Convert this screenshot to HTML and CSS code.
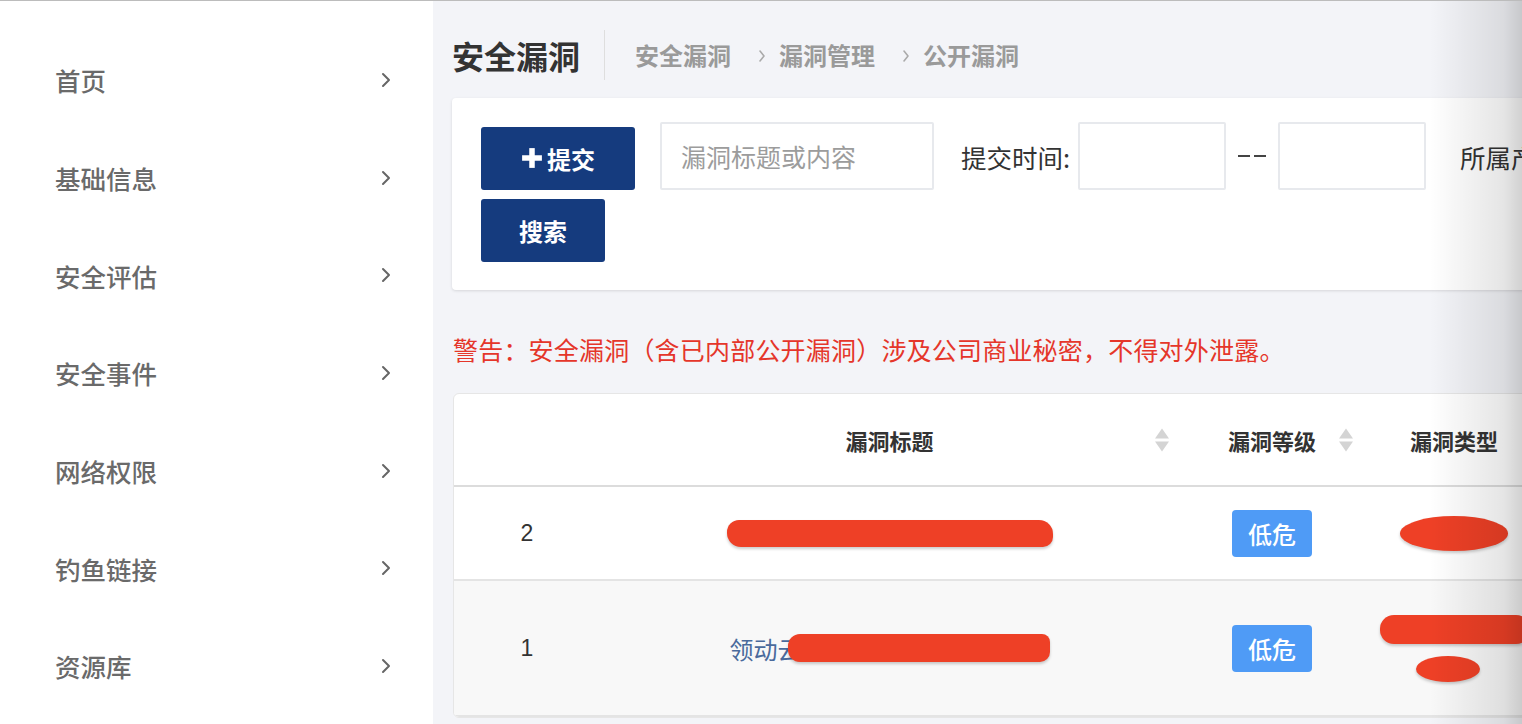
FILE: index.html
```html
<!DOCTYPE html>
<html lang="zh-CN">
<head>
<meta charset="utf-8">
<title>安全漏洞 - 公开漏洞</title>
<link rel="stylesheet" href="styles.css">
</head>
<body>
<div class="app">
  <aside class="sidebar">
    <a class="nav-item">首页<svg class="chev" viewBox="0 0 10 16"><polyline points="2,2 8,8 2,14"/></svg></a>
    <a class="nav-item">基础信息<svg class="chev" viewBox="0 0 10 16"><polyline points="2,2 8,8 2,14"/></svg></a>
    <a class="nav-item">安全评估<svg class="chev" viewBox="0 0 10 16"><polyline points="2,2 8,8 2,14"/></svg></a>
    <a class="nav-item">安全事件<svg class="chev" viewBox="0 0 10 16"><polyline points="2,2 8,8 2,14"/></svg></a>
    <a class="nav-item">网络权限<svg class="chev" viewBox="0 0 10 16"><polyline points="2,2 8,8 2,14"/></svg></a>
    <a class="nav-item">钓鱼链接<svg class="chev" viewBox="0 0 10 16"><polyline points="2,2 8,8 2,14"/></svg></a>
    <a class="nav-item">资源库<svg class="chev" viewBox="0 0 10 16"><polyline points="2,2 8,8 2,14"/></svg></a>
  </aside>
  <main class="main">
    <header class="page-header">
      <h1 class="page-title">安全漏洞</h1>
      <span class="divider"></span>
      <nav class="crumbs">
        <span class="crumb">安全漏洞</span>
        <svg class="crumb-sep" viewBox="0 0 10 14"><polyline points="3,2 7,7 3,12"/></svg>
        <span class="crumb">漏洞管理</span>
        <svg class="crumb-sep" viewBox="0 0 10 14"><polyline points="3,2 7,7 3,12"/></svg>
        <span class="crumb">公开漏洞</span>
      </nav>
    </header>

    <section class="filter-card">
      <div class="filter-row">
        <button class="btn btn-submit"><svg class="plus" viewBox="0 0 20 20"><rect x="7.5" y="1" width="5" height="18"/><rect x="1" y="7.5" width="18" height="5"/></svg>提交</button>
        <input class="text-input" type="text" placeholder="漏洞标题或内容">
        <label class="filter-label">提交时间:</label>
        <input class="date-input" type="text">
        <span class="dash"><i></i><i></i></span>
        <input class="date-input" type="text">
        <label class="filter-label product">所属产品:</label>
      </div>
      <div class="filter-row second">
        <button class="btn btn-search">搜索</button>
      </div>
    </section>

    <p class="warning">警告：安全漏洞（含已内部公开漏洞）涉及公司商业秘密，不得对外泄露。</p>

    <section class="table-card">
      <table class="vuln-table">
        <thead>
          <tr>
            <th class="col-no"></th>
            <th class="col-title">漏洞标题<span class="sorter"><i class="up"></i><i class="down"></i></span></th>
            <th class="col-level">漏洞等级<span class="sorter"><i class="up"></i><i class="down"></i></span></th>
            <th class="col-type">漏洞类型</th>
          </tr>
        </thead>
        <tbody>
          <tr>
            <td class="col-no num">2</td>
            <td class="col-title"><span class="redact r-title1"></span></td>
            <td class="col-level"><span class="badge">低危</span></td>
            <td class="col-type"><span class="redact r-type1"></span></td>
          </tr>
          <tr class="striped">
            <td class="col-no num">1</td>
            <td class="col-title"><span class="title-link">领动云</span><span class="redact r-title2"></span></td>
            <td class="col-level"><span class="badge">低危</span></td>
            <td class="col-type"><div class="type-stack"><span class="redact r-type2a"></span><span class="redact r-type2b"></span></div></td>
          </tr>
        </tbody>
      </table>
    </section>
  </main>
  <div class="edge-shade"></div>
</div>
</body>
</html>
```

FILE: styles.css
```css
* { box-sizing: border-box; }

html, body {
  margin: 0;
  padding: 0;
  height: 100%;
  overflow: hidden;
}

body {
  font-family: "Noto Sans CJK SC", "Noto Sans", sans-serif;
  border-top: 1px solid #bcbcbc;
  background: #f3f4f8;
  color: #333;
}

.app {
  position: relative;
  display: flex;
  height: 723px;
  overflow: hidden;
}

/* Sidebar */
.sidebar {
  width: 433px;
  flex: none;
  background: #fff;
  padding-top: 30px;
  display: flex;
  flex-direction: column;
}

.nav-item {
  height: 97.7px;
  flex: none;
  display: flex;
  align-items: center;
  justify-content: space-between;
  padding: 0 42px 0 55px;
  font-size: 25.5px;
  font-weight: 500;
  color: #6a6a6a;
}

.chev {
  width: 10px;
  height: 16px;
}
.chev polyline {
  fill: none;
  stroke: #666;
  stroke-width: 2;
  stroke-linecap: round;
  stroke-linejoin: round;
}

/* Main */
.main {
  flex: 1;
  min-width: 0;
  padding-left: 19px;
  display: flex;
  flex-direction: column;
}

.page-header {
  height: 97px;
  flex: none;
  padding-top: 10px;
  display: flex;
  align-items: center;
}

.page-title {
  margin: 0;
  font-size: 32px;
  font-weight: 700;
  color: #333;
  line-height: 1;
}

.divider {
  width: 1px;
  height: 50px;
  background: #dedede;
  margin: 0 30px 0 24px;
}

.crumbs {
  display: flex;
  align-items: center;
  font-size: 24px;
  font-weight: 700;
  color: #9a9a9a;
}

.crumb-sep {
  width: 10px;
  height: 14px;
  margin: 2px 12px 0 26px;
}
.crumb-sep polyline {
  fill: none;
  stroke: #aaa;
  stroke-width: 1.6;
  stroke-linecap: round;
  stroke-linejoin: round;
}

/* Filter card */
.filter-card {
  width: 1300px;
  flex: none;
  background: #fff;
  border-radius: 4px;
  box-shadow: 0 1px 3px rgba(0, 0, 0, 0.12);
  padding: 24px 0 28px 29px;
}

.filter-row {
  display: flex;
  align-items: center;
  height: 68px;
}

.filter-row.second {
  margin-top: 9px;
  height: 63px;
}

.btn {
  height: 63px;
  border: none;
  border-radius: 3px;
  background: #153b7e;
  color: #fff;
  font-family: inherit;
  font-size: 24px;
  font-weight: 700;
  display: inline-flex;
  align-items: center;
  justify-content: center;
  padding: 0;
}

.btn-submit {
  width: 154px;
  margin-top: 4px;
}
.btn-search { width: 124px; }

.plus {
  width: 22px;
  height: 22px;
  fill: #fff;
  margin-right: 4px;
}

.text-input,
.date-input {
  height: 68px;
  border: 2px solid #e7e9ed;
  border-radius: 2px;
  background: #fff;
  font-family: inherit;
  font-size: 25px;
  padding: 0 19px;
  outline: none;
}

.text-input {
  width: 274px;
  margin-left: 25px;
}
.text-input::placeholder { color: #9c9c9c; }

.date-input { width: 148px; }

.filter-label {
  font-size: 25.5px;
  color: #333;
  margin: 0 8px 0 27px;
  white-space: nowrap;
}
.filter-label.product { margin-left: 34px; }

.dash {
  display: inline-flex;
  gap: 4px;
  margin: 0 12px;
}
.dash i {
  width: 12px;
  height: 2px;
  background: #444;
}

/* Warning */
.warning {
  margin: 42px 0 0 1px;
  font-size: 25px;
  line-height: 34px;
  color: #e5362a;
  letter-spacing: 0.2px;
}

/* Table */
.table-card {
  margin-top: 27px;
  margin-left: 1px;
  width: 1200px;
  background: #fff;
  border: 1px solid #e6e6e6;
  border-radius: 6px;
  overflow: hidden;
}

.vuln-table {
  border-collapse: collapse;
  table-layout: fixed;
  width: 100%;
}

.vuln-table th,
.vuln-table td {
  padding: 0;
  text-align: center;
  vertical-align: middle;
}

.vuln-table thead th {
  height: 92px;
  position: relative;
  font-size: 22px;
  font-weight: 700;
  color: #333;
  border-bottom: 2px solid #dcdcdc;
}

.col-no { width: 146px; }
.col-title { width: 579px; }
.col-level { width: 186px; }
.col-type { width: 289px; }

.vuln-table th.col-type {
  text-align: left;
  padding-left: 45px;
}
.vuln-table td.col-type {
  text-align: left;
  padding-left: 15px;
}

.sorter {
  position: absolute;
  right: 10px;
  top: 50%;
  transform: translateY(-50%);
  display: flex;
  flex-direction: column;
  align-items: center;
  gap: 3px;
}
.sorter i {
  width: 0;
  height: 0;
  border-left: 7px solid transparent;
  border-right: 7px solid transparent;
}
.sorter .up { border-bottom: 10px solid #d4d4d4; }
.sorter .down { border-top: 10px solid #d4d4d4; }
.col-level .sorter { right: 12px; }

.vuln-table tbody td {
  border-bottom: 2px solid #e4e4e4;
}
.vuln-table tbody tr:first-child td { height: 94px; }
.vuln-table tbody tr.striped td { height: 136px; background: #f8f8f8; }

.num {
  font-family: "Liberation Sans", Arial, sans-serif;
  font-size: 23px;
  color: #333;
}

.badge {
  display: inline-flex;
  align-items: center;
  justify-content: center;
  width: 80px;
  height: 47px;
  border-radius: 4px;
  background: #4f9bf6;
  color: #fff;
  font-size: 24px;
  font-weight: 500;
}

.title-link {
  font-size: 24px;
  color: #4a6a9c;
  vertical-align: middle;
}

.redact {
  display: inline-block;
  background: #ee4026;
  border-radius: 16px;
  vertical-align: middle;
  box-shadow: 0 2px 3px rgba(0, 0, 0, 0.2);
}

.r-title1 { width: 326px; height: 27px; border-radius: 12px 14px 10px 14px; }
.r-title2 { width: 262px; height: 28px; margin-left: -14px; border-radius: 12px 8px 10px 12px; }
.r-type1 { width: 108px; height: 35px; border-radius: 50%; margin-left: 20px; }

.type-stack {
  display: flex;
  flex-direction: column;
  align-items: flex-start;
  gap: 12px;
}
.r-type2a { width: 150px; height: 29px; border-radius: 14px; }
.r-type2b { width: 64px; height: 26px; border-radius: 50%; margin-left: 36px; }

/* right edge shading */
.edge-shade {
  position: absolute;
  top: 0;
  right: 0;
  width: 92px;
  height: 100%;
  pointer-events: none;
  background: linear-gradient(to right, rgba(0, 0, 0, 0), rgba(0, 0, 0, 0.1) 80%, rgba(0, 0, 0, 0.18));
}
```
